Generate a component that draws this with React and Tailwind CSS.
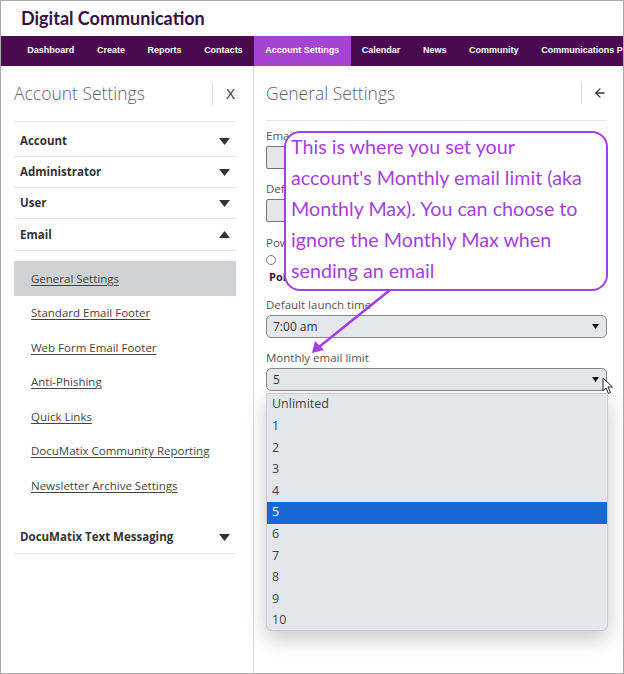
import React from 'react';
import { ArrowLeft } from 'lucide-react';

const navItems = ['Dashboard', 'Create', 'Reports', 'Contacts', 'Account Settings', 'Calendar', 'News', 'Community', 'Communications Preferences'];
const sections = ['Account', 'Administrator', 'User'];
const emailLinks = ['General Settings', 'Standard Email Footer', 'Web Form Email Footer', 'Anti-Phishing', 'Quick Links', 'DocuMatix Community Reporting', 'Newsletter Archive Settings'];
const limits = ['Unlimited', '1', '2', '3', '4', '5', '6', '7', '8', '9', '10'];

const Caret = ({ up }) => (
    <svg width="11" height="7" viewBox="0 0 11 7" className="shrink-0">
        <path d={up ? 'M0 7 L5.5 0 L11 7 Z' : 'M0 0 L11 0 L5.5 7 Z'} fill="#333" />
    </svg>
);

const SmallCaret = () => (
    <svg width="7" height="5" viewBox="0 0 7 5">
        <path d="M0 0 L7 0 L3.5 5 Z" fill="#111" />
    </svg>
);

export default function App() {
    return (
        <div className="relative w-[624px] h-[674px] overflow-hidden bg-white border border-[#a9a9a9]" style={{ fontFamily: '"Open Sans", sans-serif' }}>
            {/* Header */}
            <div className="h-[35px] flex items-center pl-[20px]">
                <span className="text-[18px] font-bold text-[#3b0f44]" style={{ fontFamily: 'Lato, sans-serif' }}>Digital Communication</span>
            </div>

            {/* Nav */}
            <div className="h-[30px] bg-[#4a0a4f] flex pl-[15px] whitespace-nowrap">
                {navItems.map((item) => (
                    <div key={item} className={`px-[11.3px] flex items-center text-[9px] font-bold text-white ${item === 'Account Settings' ? 'bg-[#a643d2]' : ''}`} style={{ fontFamily: '"Liberation Sans", sans-serif' }}>
                        {item}
                    </div>
                ))}
            </div>

            <div className="flex h-[608px]">
                {/* Left panel */}
                <div className="w-[253px] shrink-0 border-r border-[#dcdcdc] px-[13px] pr-[17px]">
                    <div className="h-[56px] flex items-center border-b border-[#e6e6e6]">
                        <span className="flex-1 text-[17.5px] font-light text-[#5f6368]">Account Settings</span>
                        <div className="w-px h-[22px] bg-[#dcdcdc] mr-[13px]" />
                        <span className="text-[15px] text-[#333] pr-[1px]">X</span>
                    </div>
                    <div className="mt-[4px]">
                        {sections.map((s) => (
                            <div key={s} className="h-[31px] flex items-center justify-between border-b border-[#e6e6e6] pl-[6px] pr-[6px]">
                                <span className="text-[11.5px] font-bold text-[#333]">{s}</span>
                                <Caret />
                            </div>
                        ))}
                        <div className="h-[32px] flex items-center justify-between border-b border-[#e6e6e6] pl-[6px] pr-[6px]">
                            <span className="text-[11.5px] font-bold text-[#333]">Email</span>
                            <Caret up />
                        </div>
                    </div>
                    <div className="mt-[10px]">
                        {emailLinks.map((l, i) => (
                            <div key={l} className={`h-[34.5px] flex items-center pl-[17px] ${i === 0 ? 'bg-[#cfd1d4]' : ''}`}>
                                <span className="text-[11.5px] text-[#444] underline underline-offset-[2px]">{l}</span>
                            </div>
                        ))}
                    </div>
                    <div className="mt-[19px] h-[32px] flex items-center justify-between border-b border-[#e6e6e6] pl-[6px] pr-[6px]">
                        <span className="text-[11.5px] font-bold text-[#333]">DocuMatix Text Messaging</span>
                        <Caret />
                    </div>
                </div>

                {/* Right panel */}
                <div className="flex-1 pl-[12px] pr-[16px]">
                    <div className="h-[55px] flex items-center border-b border-[#e6e6e6]">
                        <span className="flex-1 text-[17.5px] font-light text-[#5f6368]">General Settings</span>
                        <div className="w-px h-[22px] bg-[#dcdcdc] mr-[11px]" />
                        <ArrowLeft size={14} strokeWidth={2.2} color="#333" />
                    </div>
                    <div className="pt-[5px] text-[11.5px] text-[#555]">
                        <div className="h-[20px] flex items-center">Email</div>
                        <div className="w-[40px] h-[23px] border border-[#777] bg-[#e6e6e6] rounded-[2px]" />
                        <div className="h-[20px] mt-[10px] flex items-center">Default</div>
                        <div className="w-[40px] h-[23px] border border-[#777] bg-[#e6e6e6] rounded-[2px]" />
                        <div className="h-[20px] mt-[11px] flex items-center">Power</div>
                        <div className="h-[14px] flex items-center">
                            <div className="w-[10px] h-[10px] rounded-full border border-[#777]" />
                        </div>
                        <div className="h-[20px] flex items-center pl-[3px] text-[11px] font-bold text-[#3b0f44]">Pol</div>
                        <div className="h-[20px] mt-[8px] flex items-center">Default launch time</div>
                        <div className="h-[23px] rounded-[5px] border border-[#8a8a8a] bg-[#e4e7eb] flex items-center justify-between pl-[6px] pr-[7px] text-[#333] text-[12px]">
                            <span>7:00 am</span>
                            <SmallCaret />
                        </div>
                        <div className="h-[20px] mt-[10px] flex items-center">Monthly email limit</div>
                        <div className="h-[23px] rounded-[5px] border border-[#8a8a8a] bg-[#e4e7eb] flex items-center justify-between pl-[6px] pr-[7px] text-[#333] text-[12px]">
                            <span>5</span>
                            <SmallCaret />
                        </div>
                        <div className="h-[20px] mt-[16px] flex items-center">Default</div>
                        <div className="h-[23px] rounded-[5px] border border-[#8a8a8a] bg-[#e4e7eb]" />
                    </div>
                </div>
            </div>

            {/* Open dropdown list */}
            <div className="absolute left-[265px] top-[392px] w-[342px] h-[238px] bg-[#e3e6ea] rounded-b-[6px] border border-[#c8ccd1] shadow-[0_8px_20px_rgba(0,0,0,0.22)] text-[12.5px] text-[#444]">
                {limits.map((v) => (
                    <div key={v} className={`h-[21.6px] flex items-center pl-[5px] ${v === '5' ? 'bg-[#1967d2] text-white' : ''}`}>{v}</div>
                ))}
            </div>

            {/* Callout */}
            <div className="absolute left-[283px] top-[130px] w-[324px] h-[160px] bg-white border-2 border-[#a43fe0] rounded-[16px] pl-[5px] text-[19.7px] leading-[31px] text-[#a43fe0] whitespace-nowrap" style={{ fontFamily: 'Lato, sans-serif' }}>
                <div className="-mt-[2px]">
                    This is where you set your<br />
                    account's Monthly email limit (aka<br />
                    Monthly Max). You can choose to<br />
                    ignore the Monthly Max when<br />
                    sending an email
                </div>
            </div>

            {/* Pointer arrow */}
            <svg className="absolute left-0 top-0 pointer-events-none" width="624" height="674">
                <line x1="389" y1="289" x2="318" y2="346" stroke="#a43fe0" strokeWidth="2.5" />
                <path d="M311 352 L314 340 L323 349 Z" fill="#a43fe0" />
            </svg>

            {/* Mouse cursor */}
            <svg className="absolute left-[601px] top-[376px]" width="12" height="18" viewBox="0 0 12 18">
                <path d="M1 1 L1 14 L4 11 L6.5 16.5 L8.5 15.5 L6 10 L10.5 10 Z" fill="#fff" stroke="#222" strokeWidth="1" strokeLinejoin="round" />
            </svg>
        </div>
    );
}
